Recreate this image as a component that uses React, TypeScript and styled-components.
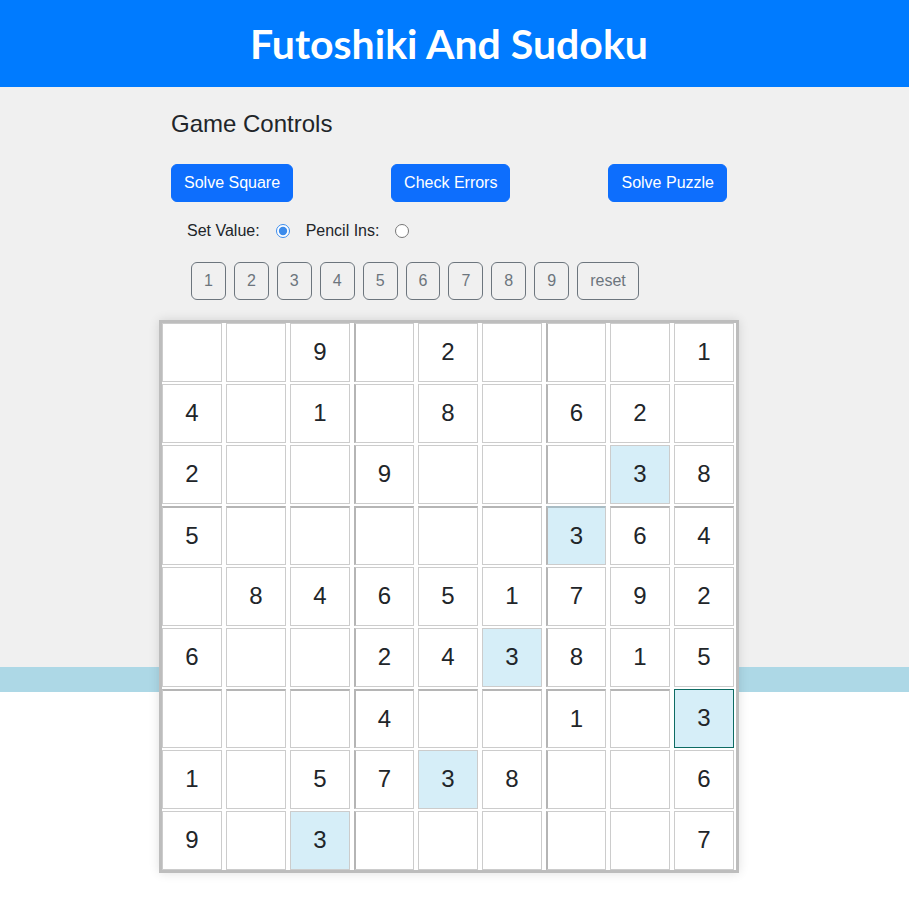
import React from 'react';
import styled, { createGlobalStyle } from 'styled-components';

const GlobalStyle = createGlobalStyle`
  html, body {
    margin: 0;
    padding: 0;
    background: #fff;
  }
  body {
    font-family: "Liberation Sans", Arial, sans-serif;
    color: #212529;
  }
`;

const Header = styled.header`
  height: 87px;
  padding-right: 11px;
  background: #007bff;
  display: flex;
  align-items: center;
  justify-content: center;
`;

const Title = styled.h1`
  margin: 0;
  color: #fff;
  font-family: Lato, "Noto Sans", sans-serif;
  font-weight: 700;
  font-size: 41px;
  line-height: 1;
`;

/* grey play area, then the light blue band, then the white page */
const Main = styled.main`
  padding-bottom: 40px;
  background: linear-gradient(
    to bottom,
    #f0f0f0 0,
    #f0f0f0 580px,
    #add8e6 580px,
    #add8e6 605px,
    #fff 605px
  );
`;

const Column = styled.div`
  width: 580px;
  margin-left: calc(50% - 295.5px);
`;

const Controls = styled.section`
  padding: 23px 12px 0;
`;

const Heading = styled.h4`
  margin: 0 0 25px;
  font-size: 24px;
  font-weight: 400;
  line-height: 1.2;
`;

const ActionRow = styled.div`
  display: flex;
  justify-content: space-between;
`;

const PrimaryButton = styled.button`
  font-family: inherit;
  font-size: 16px;
  line-height: 1.5;
  padding: 6px 12px;
  color: #fff;
  background: #0d6efd;
  border: 1px solid #0d6efd;
  border-radius: 6px;
`;

const ModeRow = styled.div`
  display: flex;
  align-items: center;
  height: 24px;
  margin: 17px 0 0 16px;
  font-size: 16px;
`;

const ModeLabel = styled.label`
  display: flex;
  align-items: center;
  margin-right: 16px;

  input {
    margin: 0 0 0 16px;
    width: 14px;
    height: 14px;
    accent-color: #3b8beb;
  }
`;

const NumberRow = styled.div`
  display: flex;
  gap: 8px;
  margin: 19px 0 20px 20px;
`;

const OutlineButton = styled.button`
  font-family: inherit;
  font-size: 16px;
  line-height: 1.5;
  padding: 6px 12px;
  color: #6c757d;
  background: transparent;
  border: 1px solid #6c757d;
  border-radius: 6px;
`;

const Board = styled.div`
  width: 574px;
  border: 3px solid #bdbdbd;
  box-shadow: 0 0 10px rgba(0, 0, 0, 0.12);
  background: #fff;
  display: grid;
  grid-template-columns: repeat(9, 60px);
  grid-auto-rows: 59px;
  column-gap: 4px;
  row-gap: 2px;
`;

const Cell = styled.div<{ $thickLeft: boolean; $thickTop: boolean; $lit: boolean; $selected: boolean }>`
  box-sizing: border-box;
  display: flex;
  align-items: center;
  justify-content: center;
  font-size: 24px;
  color: #212529;
  background: ${(p) => (p.$lit || p.$selected ? '#d6eef8' : '#fff')};
  border: 1px solid ${(p) => (p.$selected ? '#0d6b63' : '#cccccc')};
  ${(p) => p.$thickLeft && !p.$selected && 'border-left: 2px solid #b5b5b5;'}
  ${(p) => p.$thickTop && !p.$selected && `border-top: 2px solid ${p.$lit ? '#a9bcc4' : '#b5b5b5'};`}
`;

const puzzle = [
  '009020001',
  '401080620',
  '200900038',
  '500000364',
  '084651792',
  '600243815',
  '000400103',
  '105738006',
  '903000007',
];

const selected = { row: 6, col: 8 };

export default function App() {
  const selectedValue = puzzle[selected.row][selected.col];

  return (
    <>
      <GlobalStyle />
      <Header>
        <Title>Futoshiki And Sudoku</Title>
      </Header>
      <Main>
        <Column>
          <Controls>
            <Heading>Game Controls</Heading>
            <ActionRow>
              <PrimaryButton>Solve Square</PrimaryButton>
              <PrimaryButton>Check Errors</PrimaryButton>
              <PrimaryButton>Solve Puzzle</PrimaryButton>
            </ActionRow>
            <ModeRow>
              <ModeLabel>
                Set Value:
                <input type="radio" name="mode" defaultChecked />
              </ModeLabel>
              <ModeLabel>
                Pencil Ins:
                <input type="radio" name="mode" />
              </ModeLabel>
            </ModeRow>
            <NumberRow>
              {[1, 2, 3, 4, 5, 6, 7, 8, 9].map((n) => (
                <OutlineButton key={n}>{n}</OutlineButton>
              ))}
              <OutlineButton>reset</OutlineButton>
            </NumberRow>
          </Controls>
          <Board>
            {puzzle.map((line, r) =>
              line.split('').map((ch, c) => {
                const isSelected = r === selected.row && c === selected.col;
                return (
                  <Cell
                    key={`${r}-${c}`}
                    $thickLeft={c === 3 || c === 6}
                    $thickTop={r === 3 || r === 6}
                    $lit={ch !== '0' && ch === selectedValue}
                    $selected={isSelected}
                  >
                    {ch === '0' ? '' : ch}
                  </Cell>
                );
              })
            )}
          </Board>
        </Column>
      </Main>
    </>
  );
}
